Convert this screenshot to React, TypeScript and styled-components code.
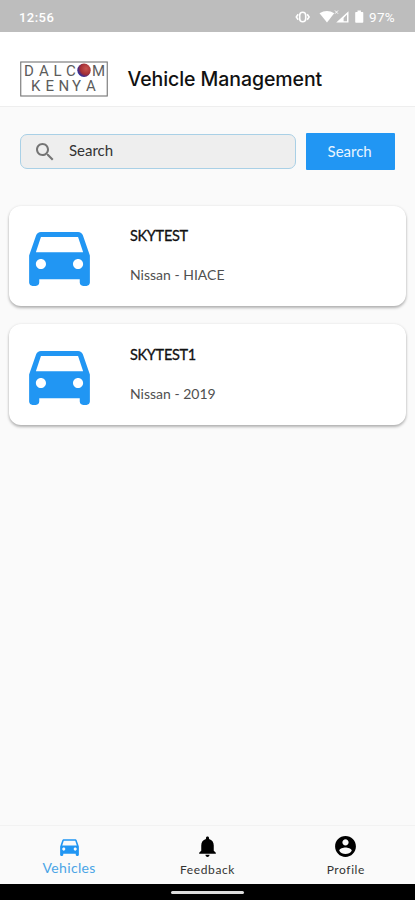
import React from "react";
import styled, { createGlobalStyle } from "styled-components";

const GlobalStyle = createGlobalStyle`
  * { box-sizing: border-box; }
  body { margin: 0; background: #fafafa; font-family: Lato, "Open Sans", sans-serif; color: #111; }
`;

const Screen = styled.div`
  display: flex;
  flex-direction: column;
  width: 415px;
  height: 900px;
  background: #fafafa;
  overflow: hidden;
`;

const StatusBar = styled.div`
  display: flex;
  align-items: center;
  justify-content: space-between;
  height: 32px;
  padding: 2px 20px 0 19px;
  background: #bdbdbd;
  color: #fff;
  font: 500 13px Roboto, sans-serif;
  letter-spacing: 0.45px;
`;

const StatusIcons = styled.div`
  display: flex;
  align-items: center;
  gap: 2px;
  font-weight: 400;
  font-size: 13.5px;
  letter-spacing: 0.3px;
  svg { display: block; }
`;

const Header = styled.header`
  display: flex;
  align-items: center;
  gap: 20px;
  height: 75px;
  padding: 19px 20px 0;
  background: #fff;
  border-bottom: 1px solid #eeeeee;
`;

const Title = styled.h1`
  margin: 0 0 0 -0.5px;
  font: 500 19.5px/24px Inter, sans-serif;
  letter-spacing: -0.08px;
  color: #111;
  white-space: nowrap;
`;

const SearchRow = styled.div`
  display: flex;
  gap: 10px;
  height: 37px;
  margin: 26px 20px 0;
`;

const SearchField = styled.div`
  display: flex;
  align-items: center;
  width: 277px;
  height: 35px;
  margin-top: 1px;
  padding: 0 0 3px 12px;
  gap: 12px;
  border: 1px solid #a9d0e6;
  border-radius: 7px;
  background: #eeeeee;
  font-size: 15px;
  color: #333;
  svg { position: relative; top: 1.5px; color: #757575; }
`;

const SearchButton = styled.button`
  width: 89px;
  height: 37px;
  padding: 0 2px 1px 0;
  border: 0;
  border-radius: 1px;
  background: #2196f3;
  color: #e9f5ff;
  font: 400 15px Lato, sans-serif;
`;

const CardList = styled.main`
  display: flex;
  flex: 1;
  flex-direction: column;
  gap: 18px;
  padding: 36px 9px 0 9px;
`;

const Card = styled.article<{ $height: number; $top: number }>`
  display: flex;
  gap: 30px;
  height: ${(p) => p.$height}px;
  padding: ${(p) => p.$top}px 0 0 10px;
  border-radius: 12px;
  background: #fff;
  box-shadow: 0 2px 3px rgba(0, 0, 0, 0.28), 0 0 3px rgba(0, 0, 0, 0.08);
  svg { flex: none; }
`;

const CardText = styled.div`
  display: flex;
  flex-direction: column;
  gap: 19px;
  padding-top: 11px;
`;

const Plate = styled.div`
  font: 400 14.5px/20px Lato, sans-serif;
  letter-spacing: -0.3px;
  -webkit-text-stroke: 0.3px #111;
  color: #111;
`;

const Model = styled.div`
  font: 400 14px/20px Lato, sans-serif;
  color: #505050;
`;

const TabBar = styled.nav`
  display: grid;
  grid-template-columns: repeat(3, 1fr);
  height: 59px;
  padding-top: 8px;
  border-top: 1px solid #f2f2f2;
`;

const Tab = styled.div`
  display: flex;
  flex-direction: column;
  align-items: center;
`;

const TabIcon = styled.div<{ $active?: boolean }>`
  color: ${(p) => (p.$active ? "#2196f3" : "#000")};
  svg { display: block; }
`;

const TabLabel = styled.span<{ $active?: boolean }>`
  margin-top: ${(p) => (p.$active ? 0 : 1)}px;
  font-size: ${(p) => (p.$active ? 14 : 12)}px;
  line-height: ${(p) => (p.$active ? 18 : 20)}px;
  letter-spacing: ${(p) => (p.$active ? 0.35 : 0.6)}px;
  color: ${(p) => (p.$active ? "#4ba5e6" : "#333")};
`;

const HomeBar = styled.div`
  display: flex;
  justify-content: center;
  height: 16px;
  padding-top: 7px;
  background: #000;
`;

const HomeHandle = styled.div`
  width: 73px;
  height: 3px;
  border-radius: 2px;
  background: #ddd;
`;

const Icon = ({ size, d }: { size: number; d: string }) => (
  <svg width={size} height={size} viewBox="0 0 24 24" fill="currentColor"><path d={d} /></svg>
);

const CarBox = styled.div`
  width: 81px;
  height: 81px;
  color: #2196f3;
`;

const CAR = "M18.92 6.01C18.72 5.42 18.16 5 17.5 5h-11c-.66 0-1.21.42-1.42 1.01L3 12v8c0 .55.45 1 1 1h1c.55 0 1-.45 1-1v-1h12v1c0 .55.45 1 1 1h1c.55 0 1-.45 1-1v-8l-2.08-5.99zM6.5 16c-.83 0-1.5-.67-1.5-1.5S5.67 13 6.5 13s1.5.67 1.5 1.5S7.33 16 6.5 16zm11 0c-.83 0-1.5-.67-1.5-1.5s.67-1.5 1.5-1.5 1.5.67 1.5 1.5-.67 1.5-1.5 1.5zM5 11l1.5-4.5h11L19 11H5z";
const SEARCH = "M15.5 14h-.79l-.28-.27C15.41 12.59 16 11.11 16 9.5 16 5.91 13.09 3 9.5 3S3 5.91 3 9.5 5.91 16 9.5 16c1.61 0 3.09-.59 4.23-1.57l.27.28v.79l5 4.99L20.49 19l-4.99-5zm-6 0C7.01 14 5 11.99 5 9.5S7.01 5 9.5 5 14 7.01 14 9.5 11.99 14 9.5 14z";
const BELL = "M12 22c1.1 0 2-.9 2-2h-4c0 1.1.89 2 2 2zm6-6v-5c0-3.07-1.64-5.64-4.5-6.32V4c0-.83-.67-1.5-1.5-1.5s-1.5.67-1.5 1.5v.68C7.63 5.36 6 7.92 6 11v5l-2 2v1h16v-1l-2-2z";
const PROFILE = "M12 2C6.48 2 2 6.48 2 12s4.48 10 10 10 10-4.48 10-10S17.52 2 12 2zm0 3c1.66 0 3 1.34 3 3s-1.34 3-3 3-3-1.34-3-3 1.34-3 3-3zm0 14.2c-2.5 0-4.71-1.28-6-3.22.03-1.99 4-3.08 6-3.08 1.99 0 5.97 1.09 6 3.08-1.29 1.94-3.5 3.22-6 3.22z";

const Logo = () => (
  <svg width="88" height="36" viewBox="0 0 88 36">
    <defs>
      <radialGradient id="ball" cx="66%" cy="38%" r="72%">
        <stop offset="0" stopColor="#c8554f" />
        <stop offset=".6" stopColor="#a32e35" />
        <stop offset=".82" stopColor="#4b2a80" />
        <stop offset="1" stopColor="#263aac" />
      </radialGradient>
    </defs>
    <rect x=".75" y="1" width="86.5" height="34" fill="#fff" stroke="#747474" strokeWidth="1.1" />
    <g fill="#5c5c5c" fontFamily="Roboto, sans-serif" fontWeight="400" fontSize="15">
      <text y="14.5" x="4 19 33.5 46 72">DALCM</text>
      <text y="30" x="11 25.5 38.5 52 66">KENYA</text>
    </g>
    <circle cx="64" cy="9.2" r="6.7" fill="url(#ball)" />
  </svg>
);

const vehicles = [
  { plate: "SKYTEST", model: "Nissan - HIACE", height: 100, top: 9 },
  { plate: "SKYTEST1", model: "Nissan - 2019", height: 101, top: 10 },
];

export default function App() {
  return (
    <Screen>
      <GlobalStyle />
      <StatusBar>
        <span>12:56</span>
        <StatusIcons>
          <svg width="72" height="16" viewBox="0 0 72 16" fill="#fff">
            <g fill="none" stroke="#fff" strokeWidth="1.6">
              <rect x="4.7" y="3.2" width="6" height="9.6" rx="3" />
              <path d="M3.200 5.3 1.300 8l1.900 2.700M12.200 5.300 14.100 8l-1.900 2.700" />
            </g>
            <path d="M24.5 4.2Q32 0 39.2 4.2L32 13.6Z" />
            <path d="M40 1.5l3 3.2m0-3.2-3 3.2" stroke="#fff" strokeWidth=".9" />
            <path d="M53.5 2.2v11.4H41.2Zm-1.5 3.3-3.4 3.4v3.4H52Z" fillRule="evenodd" />
            <path d="M61 3h1.500V1.500h3.400V3h1.600q.8 0 .8.8v9.200q0 .8-.8.8H61q-.8 0-.8-.8V3.800Q60.200 3 61 3Z" />
          </svg>
          <span>97%</span>
        </StatusIcons>
      </StatusBar>
      <Header>
        <Logo />
        <Title>Vehicle Management</Title>
      </Header>
      <SearchRow>
        <SearchField>
          <Icon size={24} d={SEARCH} />
          <span>Search</span>
        </SearchField>
        <SearchButton>Search</SearchButton>
      </SearchRow>
      <CardList>
        {vehicles.map((v) => (
          <Card key={v.plate} $height={v.height} $top={v.top}>
            <CarBox><Icon size={81} d={CAR} /></CarBox>
            <CardText>
              <Plate>{v.plate}</Plate>
              <Model>{v.model}</Model>
            </CardText>
          </Card>
        ))}
      </CardList>
      <TabBar>
        <Tab><TabIcon $active><Icon size={25} d={CAR} /></TabIcon><TabLabel $active>Vehicles</TabLabel></Tab>
        <Tab><TabIcon><Icon size={25} d={BELL} /></TabIcon><TabLabel>Feedback</TabLabel></Tab>
        <Tab><TabIcon><Icon size={25} d={PROFILE} /></TabIcon><TabLabel>Profile</TabLabel></Tab>
      </TabBar>
      <HomeBar><HomeHandle /></HomeBar>
    </Screen>
  );
}
